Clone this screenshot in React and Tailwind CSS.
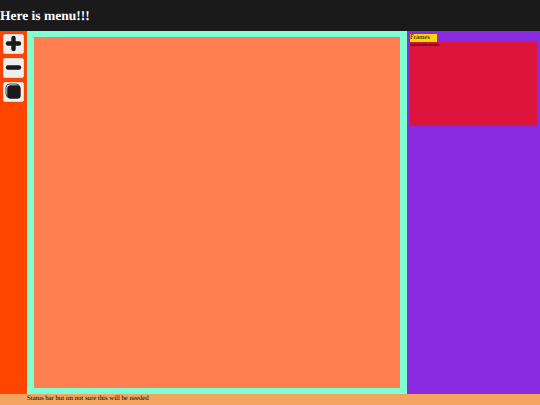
import React from "react";

const Btn = ({ children }) => (
  <button className="w-[20.5px] h-[20.5px] rounded-[2px] bg-[#efefef] flex items-center justify-center border-[0.7px] border-[#d8d8d8] shadow-[0_0_1px_rgba(0,0,0,0.3)]">
    {children}
  </button>
);

export default function App() {
  return (
    <div className="w-[540px] h-[405px] flex flex-col overflow-hidden font-['Liberation_Serif',serif] text-black [text-rendering:geometricPrecision]">
      <header className="h-[31px] shrink-0 bg-[#1a1a1a] text-white font-bold text-[13.5px] leading-[32px]">
        Here is menu!!!
      </header>
      <div className="flex flex-1 min-h-0">
        <aside className="w-[27px] shrink-0 bg-[#ff4500] flex flex-col items-center pt-[2.5px] gap-[3.5px]">
          <Btn>
            <svg width="17" height="17" viewBox="0 0 17 17">
              <path d="M8.5 3v11M3 8.5h11" stroke="#1a1a1a" strokeWidth="4.4" strokeLinecap="round" />
            </svg>
          </Btn>
          <Btn>
            <svg width="17" height="17" viewBox="0 0 17 17">
              <path d="M3 8.5h11" stroke="#1a1a1a" strokeWidth="4.4" strokeLinecap="round" />
            </svg>
          </Btn>
          <Btn>
            <svg width="17" height="17" viewBox="0 0 17 17">
              <rect x="1" y="1" width="13.5" height="13.5" rx="3.5" fill="none" stroke="#1a1a1a" strokeWidth="0.8" />
              <rect x="2.2" y="2.2" width="13.5" height="13.5" rx="3.5" fill="#1a1a1a" />
            </svg>
          </Btn>
        </aside>
        <main className="w-[380px] shrink-0 flex flex-col">
          <div className="flex-1 border-x-[7px] border-y-[6px] border-[#7fffd4] bg-[#ff7f50]" />
        </main>
        <aside className="flex-1 bg-[#8a2be2] pt-[3px] px-[3px] text-[6.75px] leading-[8px]">
          <div className="w-[27px] h-[8px] bg-[#ffd700] leading-[8px]">Frames</div>
          <div className="h-[84px] w-[127px] bg-[#dc143c] rounded-[1px] text-[4.7px] leading-[7px]">mmmmmmmm</div>
        </aside>
      </div>
      <footer className="h-[11px] shrink-0 bg-[#f4a460] pl-[27px] text-[6.75px] leading-[10px]">
        Status bar but im not sure this will be needed
      </footer>
    </div>
  );
}
